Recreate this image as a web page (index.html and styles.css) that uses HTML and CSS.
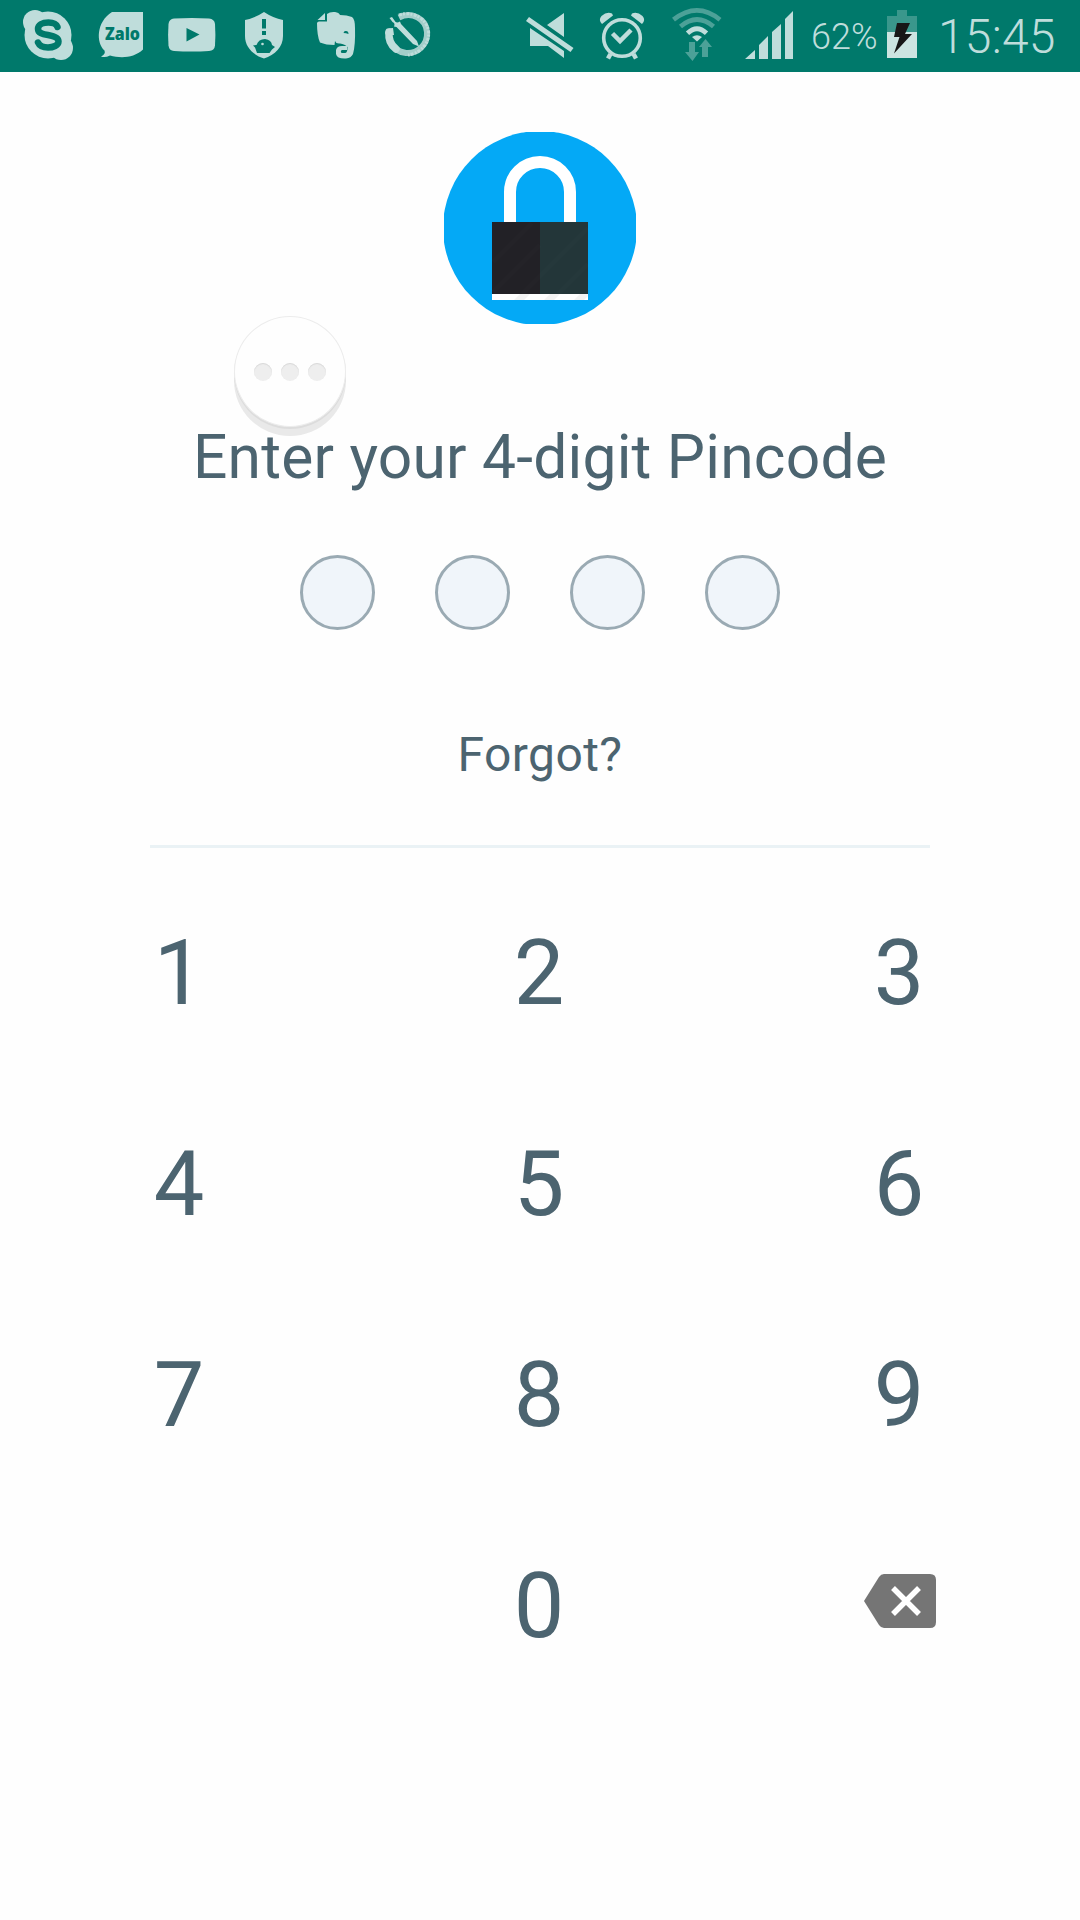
FILE: index.html
```html
<!DOCTYPE html>
<html lang="en">
<head>
<meta charset="utf-8">
<title>Pincode</title>
<link rel="stylesheet" href="styles.css">
</head>
<body>
<header class="status">
  <div class="group">
    <svg width="80" height="72" viewBox="0 0 80 72" fill="currentColor"><circle cx="48" cy="35" r="23.5"/><circle cx="35" cy="22" r="12"/><circle cx="61" cy="48" r="12"/><path class="cut-line" d="M57.500 27C56 23 52 22.500 48.500 22.500C42 22.500 38 25 38 29C38 33 42 34 48 35C54 36 58.500 37.500 58.500 41.500C58.500 45.500 53 47.500 48 47.500C42 47.500 39.500 46 38 42.500" stroke-width="6.500"/></svg>
    <svg width="80" height="72" viewBox="80 0 80 72" fill="currentColor"><path d="M112 12H143V49.500C134 58 121 58.500 110 55.500Q105 58 101 56.500Q106 54 104.500 50.500C96 43 96 22 112 12Z"/><text class="cut zalo" x="105" y="40" textLength="35" lengthAdjust="spacingAndGlyphs">Zalo</text></svg>
    <svg width="72" height="72" viewBox="160 0 72 72" fill="currentColor"><path d="M174 18.500Q192 17.500 209 18.500Q214.500 19 215 24Q215.800 35 215 45.500Q214.500 50.500 209 51Q192 52 174 51Q169 50.500 168.500 45.500Q167.700 35 168.500 24Q169 19 174 18.500Z"/><path class="cut" d="M186.500 28L199.500 34.500L186.500 41.500Z"/></svg>
    <svg width="73" height="72" viewBox="232 0 73 72" fill="currentColor"><path d="M264 12Q273 18 283 20V36C283 47 275 55 264 58.500C253 55 245 47 245 36V20Q255 18 264 12Z"/><path class="cut" d="M262 19h4v9.500h-4zM262 31h4v4h-4zM253 45.500L256.500 45Q258.500 39 265 39Q271.500 40 272 45L275 47L272 49.500L269.500 53H257L255 47.500Z"/><circle cx="262.500" cy="44" r="1.300"/></svg>
    <svg width="73" height="72" viewBox="305 0 73 72" fill="currentColor"><path d="M327 14Q330 11.500 335 12Q339 12.500 340 15Q347 15 352 17Q355 19 355 28Q355.500 45 353 54Q351 58 346 58.500Q337 59 336 54V50Q337 46 342 46H347V50H342Q340 51 341.500 53H345Q347.500 53 347.500 47Q345 44 340 43.500Q336 44 335 41L334.500 45Q326 45 320 42.500Q317 36 317 23Q317.500 21.500 319 21.500H327Z"/><path d="M317.500 20L325 13V20Z"/><path class="cut" d="M343.500 33Q344 30.500 346 31Q348.500 31 348.500 34Q346 33 343.500 33Z"/></svg>
    <svg width="72" height="72" viewBox="378 0 72 72" fill="currentColor"><path class="line" d="M399 17.500C412 11 426 19 427 32C428 45 417 54 406 53C399 52 393 48 390.500 42" stroke-width="6" opacity=".85"/><path class="line" d="M399 15C414 10 427 20 428.500 31C430 43 421 53 408 55" stroke-width="3" stroke-dasharray="3 1 2 1.500"/><path class="line" d="M389 32Q388 43 396 49" stroke-width="7.500" stroke-linecap="round"/><path class="cut" d="M394 17L390 24L402 22Z"/><path d="M385 33Q386 28 393 28L394 35H386ZM389.500 18L392 17L394.500 20.500Q396 24 400 21.500L401 24L417 41L419 46.500L413 44L396.500 27L394 26.500Q395.500 23 392.500 22Z"/></svg>
  </div>
  <div class="group">
    <svg width="75" height="72" viewBox="510 0 75 72" fill="currentColor"><path d="M564 13V37L547 25ZM530 28L564 51V58L548 46H530ZM529 17L526 21L570.500 52L573.500 48Z"/></svg>
    <svg width="75" height="72" viewBox="585 0 75 72" fill="currentColor"><circle class="line" cx="622" cy="38" r="18.300" stroke-width="3.600"/><path class="line" d="M612.500 33.500L620 41L631 30" stroke-width="4.500"/><path class="line" d="M610.500 54L608 58.500M633.500 54L636 58.500" stroke-width="4.500"/><path d="M602 24Q598 20 601.500 16Q607 11 612 13.500L613 15.500ZM642 24Q646 20 642.500 16Q637 11 632 13.500L631 15.500Z"/></svg>
    <svg width="75" height="72" viewBox="660 0 75 72" fill="currentColor"><g opacity=".4"><path class="line" d="M673.500 19.700Q697 1 720 19.700M680.500 26.500Q697 12.500 713.500 26.500" stroke-width="4.700"/><path d="M689 42h6v10h4l-6.500 9l-7.500-9h4zM705.500 39l6.500 8h-4v10h-6v-10h-3z"/></g><path class="line" d="M687.500 33.300Q697 24 706.500 33.300" stroke-width="4.700"/><path d="M692 37Q697 33.500 702 37L697 41.500Z"/></svg>
    <svg width="67" height="72" viewBox="735 0 67 72" fill="currentColor"><path d="M745 59L755 50V59ZM759 59V45L768 36V59ZM772 59V32L781 24V59ZM785 59V19L793 11V59Z"/></svg>
    <span class="percent">62%</span>
    <svg width="32" height="72" viewBox="886 0 32 72" fill="currentColor"><path opacity=".3" d="M897 10h10v6h10v16h-30V16h10z"/><path class="charge" d="M887 32h30v26h-30z"/><path fill="#171717" d="M897 23H910L905 34H912L894 53.500L899.500 37H894Z"/></svg>
    <time class="clock">15:45</time>
  </div>
</header>
<main>
  <svg class="lock" width="192" height="192" viewBox="0 0 192 192"><circle cx="96" cy="96" r="97" fill="#04a9f6"/><path d="M66 92V60a30 30 0 0 1 60 0V92" fill="none" stroke="#fff" stroke-width="12"/><path fill="#222126" d="M48 90h48v72H48z"/><path fill="#233639" d="M96 90h48v72H96z"/><path fill="#fff" d="M48 162h96v6H48z"/><path d="M49 130L88 91M49 160L96 113M78 162L144 96M114 162L144 132" stroke="#fff" stroke-opacity=".012" stroke-width="5"/><path fill="#f3f3f3" d="M76 162h10l-6 6H70zM106 162h10l-6 6h-10zM136 162h8v2l-4 4h-10z"/></svg>
  <h1>Enter your 4-digit Pincode</h1>
  <div class="pins"><i></i><i></i><i></i><i></i></div>
  <a class="forgot">Forgot?</a>
  <hr>
  <div class="keys">
    <span>1</span><span>2</span><span>3</span>
    <span>4</span><span>5</span><span>6</span>
    <span>7</span><span>8</span><span>9</span>
    <span></span><span>0</span>
    <span class="erase"><svg width="72" height="54" viewBox="0 0 72 54"><path fill="#757575" d="M20 0H66Q72 0 72 6V48Q72 54 66 54H20Q17 54 15 51L0 27L15 3Q17 0 20 0Z"/><path d="M29 14L55 40M55 14L29 40" stroke="#fff" stroke-width="5.500"/></svg></span>
  </div>
</main>
<div class="assist"><i></i><i></i><i></i></div>
</body>
</html>
```
FILE: styles.css
```css
* { box-sizing: border-box; }
body {
  margin: 0;
  width: 1080px;
  height: 1920px;
  background: #fefefe;
  color: #4c6470;
  font-family: Roboto, sans-serif;
  position: relative;
  overflow: hidden;
}
svg { display: block; flex: none; }

.status {
  height: 72px;
  background: #00796b;
  color: #bfdddb;
  display: flex;
  justify-content: space-between;
}
.group { display: flex; line-height: 72px; }
.group:last-child { width: 570px; }
.cut { fill: #00796b; }
.cut-line { fill: none; stroke: #00796b; stroke-linecap: round; }
.line { fill: none; stroke: currentColor; }
.charge { fill: #cce4e1; }
.zalo { font: 800 18px "Open Sans", sans-serif; }
.percent { width: 84px; padding: 1px 0 0 9px; font-size: 36px; font-weight: 300; }
.clock { padding: 1px 0 0 20px; font-size: 48px; font-weight: 300; letter-spacing: 0.2px; white-space: nowrap; }

main { display: flex; flex-direction: column; align-items: center; }
.lock { margin-top: 60px; }
h1 {
  margin: 99px 0 0;
  font-size: 60.5px;
  line-height: 70px;
  font-weight: 400;
  letter-spacing: 0.22px;
  white-space: nowrap;
}
.pins { display: flex; gap: 60px; margin-top: 62px; }
.pins i {
  width: 75px;
  height: 75px;
  border: 3px solid #9aaab3;
  border-radius: 50%;
  background: #f0f5fa;
}
.forgot { margin-top: 97px; font-size: 48px; line-height: 56px; letter-spacing: 0.4px; }
hr { width: 780px; height: 3px; margin: 62px 0 20px; border: 0; background: #eaf2f5; }
.keys {
  width: 1080px;
  display: grid;
  grid-template-columns: repeat(3, 360px);
  grid-auto-rows: 211px;
  text-align: center;
  font-size: 90px;
  line-height: 211px;
}
.keys span { padding-right: 2px; }
.keys .erase {
  display: flex;
  justify-content: center;
  align-items: center;
  padding: 0 0 12px;
}

/* floating assistant bubble */
.assist {
  position: absolute;
  left: 234px;
  top: 316px;
  width: 112px;
  height: 111px;
  border-radius: 50%;
  background: #fefefe;
  border: 1px solid #ececec;
  box-shadow: 0 2px 0 #dcdcdc, 0 9px 0 #e9e9e9;
  display: flex;
  align-items: center;
  justify-content: center;
  gap: 9px;
}
.assist i {
  width: 18px;
  height: 18px;
  border-radius: 50%;
  background: #eee;
  box-shadow: inset 0 1px 1px #d8d8d8;
}
```
